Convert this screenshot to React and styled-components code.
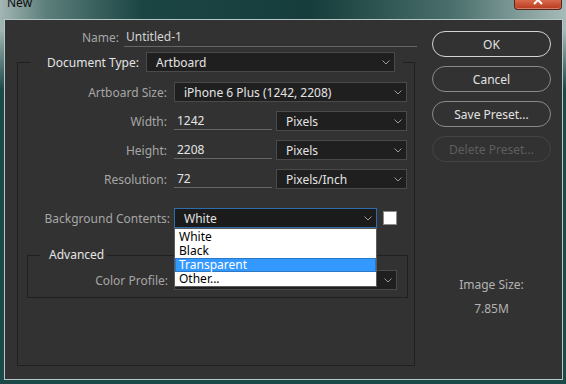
import React from "react";
import styled, { createGlobalStyle } from "styled-components";

const GlobalStyle = createGlobalStyle`
  html, body {
    margin: 0;
    padding: 0;
    overflow: hidden;
  }
  body {
    font-family: "Noto Sans", "Open Sans", sans-serif;
    font-size: 12px;
  }
`;

const Chevron = () => (
  <svg width="8" height="5" viewBox="0 0 8 5">
    <path d="M0.5 0.5 L4 4 L7.5 0.5" fill="none" stroke="#9a9a9a" strokeWidth="1" />
  </svg>
);

const Select = ({ width, value, focused, children }) => (
  <SelectBox $width={width} $focused={focused}>
    <span>{value}</span>
    <Chevron />
    {children}
  </SelectBox>
);

export default function App() {
  return (
    <>
      <GlobalStyle />
      <Screen>
        <TitleBar>
          <Title>New</Title>
          <CloseButton>
            <svg width="10" height="5" viewBox="0 0 10 5">
              <path d="M1 -4 L9 4 M9 -4 L1 4" stroke="#fff" strokeWidth="2" />
            </svg>
          </CloseButton>
        </TitleBar>
        <Body>
          <Main>
            <NameRow>
              <Label $width={114} $gap={5}>Name:</Label>
              <NameInput>Untitled-1</NameInput>
            </NameRow>

            <Group $left={12} $width={398} $top={5} $padTop={10} $padBottom={67}>
              <DocLegend>
                <LegendInner>
                  <LegendTitle>Document Type:</LegendTitle>
                  <Select width={249} value="Artboard" />
                </LegendInner>
              </DocLegend>

              <Row>
                <Label $width={149}>Artboard Size:</Label>
                <Select width={233} value="iPhone 6 Plus (1242, 2208)" />
              </Row>
              <Row $top={9}>
                <Label $width={149}>Width:</Label>
                <TextInput>1242</TextInput>
                <Select width={131} value="Pixels" />
              </Row>
              <Row $top={9}>
                <Label $width={149}>Height:</Label>
                <TextInput>2208</TextInput>
                <Select width={131} value="Pixels" />
              </Row>
              <Row $top={9}>
                <Label $width={149}>Resolution:</Label>
                <TextInput>72</TextInput>
                <Select width={131} value="Pixels/Inch" />
              </Row>
              <Row $top={19}>
                <Label $width={152} $gap={4}>Background Contents:</Label>
                <Select width={203} value="White" focused>
                  <DropList>
                    <DropItem>White</DropItem>
                    <DropItem>Black</DropItem>
                    <DropItem $active>Transparent</DropItem>
                    <DropItem>Other...</DropItem>
                  </DropList>
                </Select>
                <Swatch />
              </Row>

              <Group $left={9} $width={381} $top={19} $padTop={7} $padBottom={7}>
                <AdvLegend>Advanced</AdvLegend>
                <Row>
                  <Label $width={140} $gap={6}>Color Profile:</Label>
                  <Select width={223} value="" />
                </Row>
              </Group>
            </Group>
          </Main>

          <Side>
            <Button $primary>OK</Button>
            <Button>Cancel</Button>
            <Button>Save Preset...</Button>
            <Button $disabled>Delete Preset...</Button>
            <Info>
              <div>Image Size:</div>
              <InfoValue>7.85M</InfoValue>
            </Info>
          </Side>
        </Body>
      </Screen>
    </>
  );
}

const Screen = styled.div`
  width: 566px;
  height: 384px;
  display: flex;
  flex-direction: column;
  background:
    linear-gradient(180deg, rgba(0, 0, 0, 0) 0px, rgba(0, 0, 0, 0) 30px, #1c4a48 90px),
    linear-gradient(90deg, #a3b6b4 0%, #5d7f7c 8%, #1b4543 25%, #163d3b 55%, #4a6f6c 80%, #a7bbb9 100%);
`;

const TitleBar = styled.div`
  height: 19px;
  display: flex;
  justify-content: space-between;
  align-items: flex-start;
  flex-shrink: 0;
`;

const Title = styled.div`
  margin: -4px 0 0 7px;
  line-height: 14px;
  font-size: 12px;
  color: #0c0c0c;
`;

const CloseButton = styled.div`
  width: 48px;
  height: 10px;
  margin-right: 4px;
  box-sizing: border-box;
  display: flex;
  justify-content: center;
  background: linear-gradient(180deg, #d8694c, #b8391c);
  border: 1px solid #5b2418;
  border-top: none;
  border-radius: 0 0 4px 4px;
  box-shadow: inset 0 -1px 0 rgba(255, 255, 255, 0.35);
`;

const Body = styled.div`
  flex: 1;
  margin: 0 3px 4px 4px;
  display: flex;
  background: #323232;
  border: 1px solid #b6c8c6;
`;

const Main = styled.div`
  width: 415px;
  padding-top: 7px;
  display: flex;
  flex-direction: column;
  flex-shrink: 0;
`;

const NameRow = styled.div`
  display: flex;
  align-items: stretch;
  height: 20px;
`;

const Label = styled.div`
  width: ${(p) => p.$width}px;
  margin-right: ${(p) => p.$gap ?? 7}px;
  flex-shrink: 0;
  text-align: right;
  color: #a6a6a6;
  white-space: nowrap;
  align-self: center;
`;

const NameInput = styled.div`
  width: 293px;
  box-sizing: border-box;
  padding: 0 0 0 2px;
  line-height: 19px;
  color: #d4d4d4;
  border-bottom: 1px solid #666;
`;

const Group = styled.fieldset`
  margin: ${(p) => p.$top}px 0 0 ${(p) => p.$left}px;
  width: ${(p) => p.$width}px;
  box-sizing: border-box;
  min-width: 0;
  padding: ${(p) => p.$padTop}px 0 ${(p) => p.$padBottom}px 0;
  border: 1px solid #202020;
  display: flex;
  flex-direction: column;
`;

const DocLegend = styled.legend`
  margin-left: 13px;
  padding: 0 8px 0 16px;
`;

const LegendInner = styled.div`
  display: flex;
  align-items: center;
  gap: 7px;
  height: 20px;
`;

const LegendTitle = styled.span`
  color: #e4e4e4;
`;

const AdvLegend = styled.legend`
  margin-left: 12px;
  padding: 0 3px 0 9px;
  line-height: 16px;
  color: #e4e4e4;
`;

const Row = styled.div`
  display: flex;
  align-items: center;
  height: 20px;
  margin-top: ${(p) => p.$top ?? 0}px;
`;

const SelectBox = styled.div`
  position: relative;
  width: ${(p) => p.$width}px;
  height: 20px;
  box-sizing: border-box;
  flex-shrink: 0;
  display: flex;
  align-items: center;
  justify-content: space-between;
  padding: 0 4px 0 9px;
  background: ${(p) => (p.$focused ? "#1b1b1b" : "#1f1f1f")};
  border: 1px solid ${(p) => (p.$focused ? "#2f6cae" : "#4a4a4a")};
  color: #e4e4e4;
  white-space: nowrap;
`;

const TextInput = styled.div`
  width: 98px;
  height: 18px;
  box-sizing: border-box;
  margin-right: 4px;
  padding-left: 3px;
  line-height: 17px;
  color: #e4e4e4;
  border-bottom: 1px solid #666;
  flex-shrink: 0;
`;

const Swatch = styled.div`
  width: 14px;
  height: 14px;
  margin-left: 6px;
  box-sizing: border-box;
  background: #fff;
  border: 1px solid #8c8c8c;
`;

const DropList = styled.div`
  position: absolute;
  top: 19px;
  left: -1px;
  width: 203px;
  box-sizing: border-box;
  padding-top: 1px;
  height: 59px;
  background: #fff;
  border: 1px solid #5c5c5c;
  z-index: 10;
`;

const DropItem = styled.div`
  height: 14px;
  line-height: 14px;
  padding-left: 4px;
  color: ${(p) => (p.$active ? "#fff" : "#000")};
  background: ${(p) => (p.$active ? "#3399ff" : "transparent")};
  box-shadow: ${(p) => (p.$active ? "inset 0 0 0 1px #2a78c8" : "none")};
`;

const Side = styled.div`
  flex: 1;
  padding: 11px 0 0 12px;
  display: flex;
  flex-direction: column;
  gap: 9px;
`;

const Button = styled.div`
  width: 119px;
  height: 26px;
  box-sizing: border-box;
  border-radius: 13px;
  display: flex;
  align-items: center;
  justify-content: center;
  border: ${(p) =>
    p.$primary ? "1.5px solid #d4d4d4" : p.$disabled ? "1px solid #444" : "1px solid #8a8a8a"};
  color: ${(p) => (p.$disabled ? "#5e5e5e" : "#e2e2e2")};
`;

const Info = styled.div`
  width: 119px;
  margin-top: 106px;
  text-align: center;
  color: #b2b2b2;
  line-height: 16px;
`;

const InfoValue = styled.div`
  margin-top: 8px;
`;
